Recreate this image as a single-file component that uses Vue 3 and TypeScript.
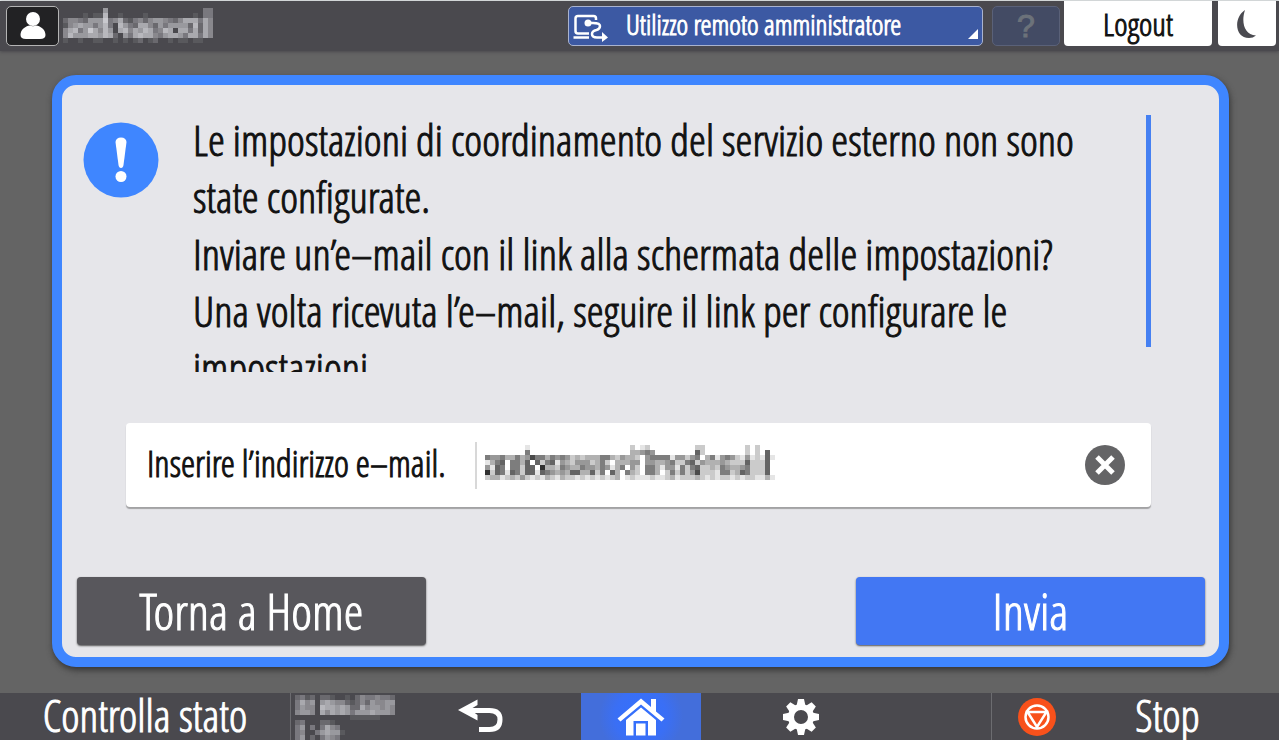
<script setup lang="ts">
import { ref } from 'vue'

interface Mosaic {
  label: string
  rows: string[]
}

const CELL = 5

const messageLines: string[] = [
  'Le impostazioni di coordinamento del servizio esterno non sono',
  'state configurate.',
  'Inviare un’e–mail con il link alla schermata delle impostazioni?',
  'Una volta ricevuta l’e–mail, seguire il link per configurare le',
  'impostazioni.',
]

// Masked values: each digit is the strength (0-9) of one square.
const userMask: Mosaic = {
  label: 'Nome utente oscurato',
  rows: [
    '000000005000000000000000000033',
    '000010117001000010000000001033',
    '244325558346213424554324666364',
    '145655357307532664253555527264',
    '467358647506746576347606636264',
    '475556657620536766435665366364',
    '100100110010101201200101101100',
  ],
}

const mailMask: Mosaic = {
  label: 'Indirizzo oscurato',
  rows: [
    '0000000010000000000000000000020120000000002200000000202000',
    '0000000050000000000000000000033454000000006200000000202060',
    '5445335347553545423233355324332045555144245035145421412161',
    '1356055360625614324442352033344044334522562433343222622260',
    '4165055266083325433544354135042055314415256223254334522260',
    '8265165266165434366336250630532055302525247222155236522260',
    '2331232421213213221212121230121112112312223212122121221131',
  ],
}

const dateMask: Mosaic = {
  label: 'Data e ora oscurate',
  rows: [
    '23120221001024334332',
    '36450565442124254455',
    '35440766565226455454',
    '45540646565355565554',
    '00000000000111111000',
    '2300022100',
    '3503036430',
    '3400356551',
    '3502035430',
  ],
}

const cellsOf = (m: Mosaic) =>
  m.rows.flatMap((row, y) =>
    [...row].map((c, x) => ({ key: `${x}-${y}`, x: x * CELL, y: y * CELL, o: Number(c) / 9 })),
  ).filter((c) => c.o > 0)

const widthOf = (m: Mosaic) => m.rows[0].length * CELL
const heightOf = (m: Mosaic) => m.rows.length * CELL

const masked = ref(true)
const email = ref('')

function clearEmail() {
  masked.value = false
  email.value = ''
}
</script>

<template>
  <div class="screen">
    <header class="topbar">
      <button class="user" type="button" aria-label="Utente">
        <svg width="28" height="30" viewBox="0 0 28 30">
          <circle cx="14" cy="8" r="7" />
          <path d="M1.500 24C1.500 18 7 15 11 14.500Q14 16 17 14.500C21 15 26.500 18 26.500 24Q26.500 28 21 28H7Q1.500 28 1.500 24Z" />
        </svg>
      </button>
      <svg class="user-mask" role="img" :aria-label="userMask.label" :width="widthOf(userMask)" :height="heightOf(userMask)" shape-rendering="crispEdges">
        <rect v-for="c in cellsOf(userMask)" :key="c.key" :x="c.x" :y="c.y" width="5" height="5" fill="#d9d9de" :fill-opacity="c.o" />
      </svg>
      <button class="remote" type="button">
        <svg width="36" height="28" viewBox="0 0 36 28" fill="none" stroke="#fff" stroke-width="2.500">
          <path d="M23 6V4.500Q23 2 20.500 2H5Q2.500 2 2.500 4.500V17Q2.500 19.500 5 19.500H16" />
          <path d="M0.500 23.500H16" />
          <path d="M15 9H20Q27 9 27 12Q27 15 23.500 16Q19 17 19 20Q19 23.500 24 23.500H30" />
          <circle cx="15" cy="9" r="3.500" fill="#fff" stroke="none" />
          <path d="M29 18L35 23.500L29 28Z" fill="#fff" stroke="none" />
        </svg>
        <span>Utilizzo remoto amministratore</span>
        <i class="corner"></i>
      </button>
      <button class="help" type="button" disabled>?</button>
      <button class="logout" type="button">Logout</button>
      <button class="sleep" type="button" aria-label="Risparmio energia">
        <svg width="22" height="30" viewBox="0 0 22 30">
          <path d="M9 1C-3 9 -1 29 13 29Q17 29 20 26.500C8 26 5 13 9 1Z" fill="#4a4a50" />
        </svg>
      </button>
    </header>

    <main class="stage">
      <section class="dialog" role="dialog" aria-label="Avviso">
        <div class="message">
          <svg class="alert" width="76" height="76" viewBox="0 0 76 76">
            <circle cx="38" cy="38" r="37.500" fill="#3f86ff" />
            <path d="M32.500 20Q33 15.500 38 15.500Q43 15.500 43.500 20L40.500 43Q40 46 38 46Q36 46 35.500 43Z" fill="#fff" />
            <circle cx="38" cy="54.500" r="5.500" fill="#fff" />
          </svg>
          <div class="copy">
            <p v-for="line in messageLines" :key="line">{{ line }}</p>
          </div>
          <div class="thumb"></div>
        </div>

        <div class="field">
          <label for="mail">Inserire l’indirizzo e–mail.</label>
          <div class="entry">
            <svg v-if="masked" class="mail-mask" role="img" :aria-label="mailMask.label" :width="widthOf(mailMask)" :height="heightOf(mailMask)" shape-rendering="crispEdges">
              <rect v-for="c in cellsOf(mailMask)" :key="c.key" :x="c.x" :y="c.y" width="5" height="5" fill="#161616" :fill-opacity="c.o" />
            </svg>
            <input id="mail" v-model="email" type="email" :readonly="masked" />
          </div>
          <button class="clear" type="button" aria-label="Cancella" @click="clearEmail">
            <svg width="40" height="40" viewBox="0 0 40 40">
              <circle cx="20" cy="20" r="20" fill="#646466" />
              <path d="M12 12L28 28M28 12L12 28" stroke="#fff" stroke-width="5" />
            </svg>
          </button>
        </div>

        <div class="actions">
          <button class="action dark" type="button">Torna a Home</button>
          <button class="action blue" type="button">Invia</button>
        </div>
      </section>
    </main>

    <footer class="bottombar">
      <button class="status" type="button"><span>Controlla stato</span></button>
      <div class="date">
        <svg role="img" :aria-label="dateMask.label" :width="widthOf(dateMask)" :height="heightOf(dateMask)" shape-rendering="crispEdges">
          <rect v-for="c in cellsOf(dateMask)" :key="c.key" :x="c.x" :y="c.y" width="5" height="5" fill="#d9d9de" :fill-opacity="c.o" />
        </svg>
      </div>
      <button type="button" aria-label="Indietro">
        <svg width="48" height="36" viewBox="0 0 48 36">
          <path d="M18 11.500H32.500Q43 11.500 43 20.500Q43 30.500 32.500 30.500H22" fill="none" stroke="#fff" stroke-width="5" />
          <path d="M20.500 0.500V6L13 10.500L20.500 16V21.500L1 11Z" fill="#fff" />
          <path d="M8 11.500H22" stroke="#fff" stroke-width="5" />
        </svg>
      </button>
      <button class="home" type="button" aria-label="Home">
        <svg width="48" height="38" viewBox="0 0 48 38" fill="#fff">
          <path d="M24 0.500L34 9V1H39V13.500L47.500 20.500L44.500 23.500L24 6.500L3.500 23.500L0.500 20.500Z" />
          <path d="M24 9.500L39 22V37.500H31V23H16.500V37.500H9V22Z" />
          <rect x="19" y="25.500" width="9.500" height="12" />
        </svg>
      </button>
      <button type="button" aria-label="Impostazioni">
        <svg width="38" height="38" viewBox="-19 -19 38 38">
          <g fill="#fff">
            <path v-for="a in [0, 45, 90, 135, 180, 225, 270, 315]" :key="a" d="M-4.500 -11L-3 -18H3L4.500 -11Z" :transform="`rotate(${a})`" />
          </g>
          <circle r="10" fill="none" stroke="#fff" stroke-width="6" />
        </svg>
      </button>
      <span></span>
      <button class="stop" type="button">
        <svg width="38" height="38" viewBox="-19 -19 38 38">
          <circle r="19" fill="#f8511b" />
          <circle r="11.500" fill="none" stroke="#fff" stroke-width="2.500" />
          <path d="M-9.500 -5H9.500L0 10Z" fill="none" stroke="#fff" stroke-width="2.500" />
        </svg>
        <span>Stop</span>
      </button>
    </footer>
  </div>
</template>

<style>
body {
  margin: 0;
  background: #646464;
}
</style>

<style scoped>
.screen {
  display: flex;
  flex-direction: column;
  min-height: 100vh;
  box-sizing: border-box;
  border-top: 1px solid #eef3f3;
  background: #646464;
  font-family: "Open Sans Condensed Light", "Roboto Condensed", "Liberation Sans", sans-serif;
  color: #111;
  -webkit-text-stroke: 1px currentColor;
}

button {
  display: flex;
  align-items: center;
  justify-content: center;
  box-sizing: border-box;
  padding: 0;
  border: 0;
  background: none;
  color: inherit;
  font-family: inherit;
  line-height: 1;
  white-space: nowrap;
}

svg {
  flex: none;
}

.topbar {
  display: flex;
  align-items: flex-start;
  height: 50px;
  padding: 0 3px 0 6px;
  background: #4a494e;
  box-shadow: 0 1px 3px #4a494e;
}

.user {
  width: 53px;
  height: 40px;
  margin-top: 5px;
  border: 1px solid #b4b4b4;
  border-radius: 5px;
  background: #222224;
}

.user svg {
  fill: #fff;
}

.user-mask {
  margin: 7px auto 0 4px;
}

.remote {
  position: relative;
  justify-content: flex-start;
  width: 415px;
  height: 40px;
  margin: 5px 9px 0 0;
  padding-left: 4px;
  gap: 17px;
  border: 1px solid #a9b3cf;
  border-radius: 5px;
  background: #3c59a3;
  color: #fff;
  font-size: 28px;
}

.remote svg {
  margin-top: 4px;
}

.remote span {
  padding-bottom: 4px;
}

.corner {
  position: absolute;
  right: 4px;
  bottom: 6px;
  border-left: 10px solid transparent;
  border-bottom: 10px solid #fff;
}

.help {
  width: 68px;
  height: 40px;
  margin: 5px 4px 0 0;
  border: 1px solid #5a6178;
  border-radius: 5px;
  background: #434b64;
  color: #6c727a;
  font-family: "Liberation Sans", sans-serif;
  font-size: 32px;
}

.logout,
.sleep {
  height: 45px;
  border-radius: 0 0 4px 4px;
  background: #fff;
  font-size: 32px;
}

.logout {
  width: 148px;
  margin-right: 6px;
}

.sleep {
  width: 58px;
}

.stage {
  flex: 1;
  display: flex;
  padding: 24px 50px 26px 52px;
}

.dialog {
  flex: 1;
  display: flex;
  flex-direction: column;
  box-sizing: border-box;
  min-width: 0;
  padding: 26px 14px 12px 15px;
  border: 10px solid #3f86ff;
  border-radius: 24px;
  background: #e6e6ea;
  box-shadow: 1px 3px 6px #333;
}

.message {
  display: flex;
  align-items: flex-start;
  height: 261px;
  padding: 0 54px 0 6px;
}

.alert {
  margin: 11px 34px 0 0;
}

.copy {
  flex: 1;
  min-width: 0;
  height: 261px;
  overflow: hidden;
  white-space: nowrap;
  font-size: 43px;
}

.copy p {
  margin: 0;
  line-height: 57px;
}

.thumb {
  flex: none;
  width: 5px;
  height: 232px;
  margin-top: 4px;
  background: #4580f2;
}

.field {
  display: flex;
  align-items: center;
  height: 84px;
  margin: 51px 54px 0 49px;
  padding: 0 26px 0 21px;
  box-sizing: border-box;
  border-radius: 4px;
  background: #fff;
  box-shadow: 0 2px 1px #a2a2a4;
}

.field label {
  width: 328px;
  padding-bottom: 4px;
  font-size: 36px;
  white-space: nowrap;
}

.entry {
  position: relative;
  flex: 1;
  height: 47px;
  border-left: 2px solid #d8d8d8;
}

.entry input {
  width: 100%;
  height: 100%;
  box-sizing: border-box;
  padding: 0 8px;
  border: 0;
  outline: 0;
  background: none;
  font: inherit;
  font-size: 36px;
}

.mail-mask {
  position: absolute;
  left: 8px;
  top: 3px;
  pointer-events: none;
}

.actions {
  display: flex;
  justify-content: space-between;
  margin-top: auto;
}

.action {
  width: 349px;
  height: 68px;
  border-radius: 4px;
  color: #fff;
  font-size: 50px;
  box-shadow: 0 1px 2px #555;
}

.dark {
  background: #58575c;
}

.blue {
  background: #4277f3;
}

.bottombar {
  display: grid;
  grid-template-columns: 290fr 91fr 200fr 120fr 200fr 90fr 288fr;
  grid-template-rows: 47px;
  background: #4a494e;
  color: #fff;
}

.status,
.stop {
  font-size: 44px;
}

.status span,
.stop span {
  padding-bottom: 3px;
}

.date {
  min-width: 0;
  padding: 2px 0 0 4px;
  border-left: 1px solid #6c6c70;
}

.date svg {
  display: block;
}

.home {
  background: radial-gradient(circle, #3370ff 0%, #3a6ff5 40%, #436edb 65%);
}

.stop {
  justify-content: flex-start;
  padding-left: 26px;
  border-left: 1px solid #6c6c70;
}

.stop span {
  flex: 1;
}
</style>
